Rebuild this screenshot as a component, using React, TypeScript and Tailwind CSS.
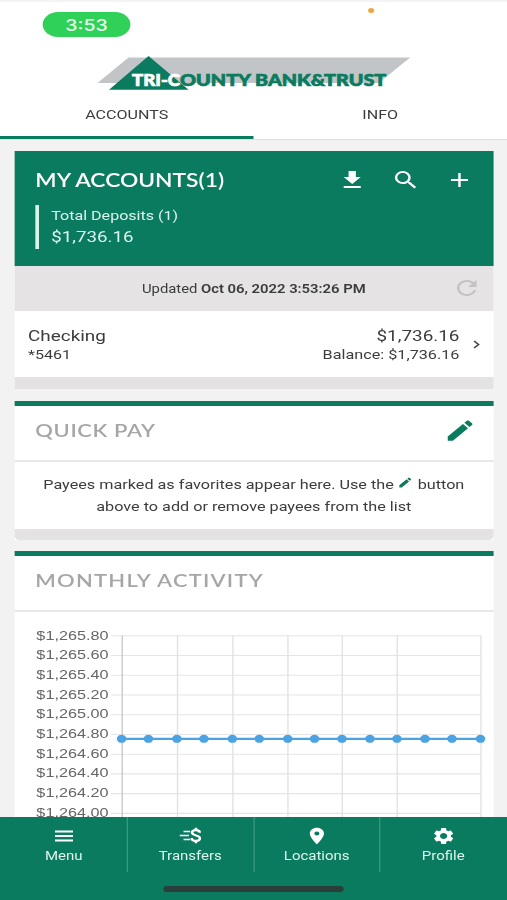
import type { ReactNode } from "react";
import { MdAdd, MdEdit, MdFileDownload, MdRefresh, MdSearch, MdPlace, MdSettings } from "react-icons/md";

const yLabels = [
  "$1,265.80",
  "$1,265.60",
  "$1,265.40",
  "$1,265.20",
  "$1,265.00",
  "$1,264.80",
  "$1,264.60",
  "$1,264.40",
  "$1,264.20",
  "$1,264.00",
];

const gridX = [122.3, 177.6, 233, 288, 342.3, 397.3, 481];
const points = [121.7, 148.5, 177, 204, 232.4, 259.3, 287.8, 314.6, 342, 370, 397, 425, 452, 480.5];

function Logo() {
  return (
    <svg className="block h-[36px] w-[257px]" viewBox="98 55 313 36" preserveAspectRatio="none">
      <polygon points="129,57.5 410.5,57.5 379,83 98,83" fill="#c1c5c8" />
      <polygon points="149,56 189,89.7 109.5,89.7" fill="#0b7b5f" />
      <g fontFamily="Lato, sans-serif" fontWeight="900" fontSize="16.2" strokeWidth="0.7">
        <text x="132.5" y="86" textLength="48" lengthAdjust="spacingAndGlyphs" fill="#fff" stroke="#fff">
          TRI-C
        </text>
        <text x="180.5" y="86" textLength="71" lengthAdjust="spacingAndGlyphs" fill="#0b7b5f" stroke="#0b7b5f">
          OUNTY
        </text>
        <text x="255.5" y="86" textLength="131" lengthAdjust="spacingAndGlyphs" fill="#0b7b5f" stroke="#0b7b5f">
          BANK&amp;TRUST
        </text>
      </g>
    </svg>
  );
}

function MenuIcon() {
  return (
    <svg className="h-3 w-[15px]" viewBox="0 0 15 12" stroke="currentColor" strokeWidth="2">
      <path d="M0 1.4H15M0 6H15M0 10.6H15" />
    </svg>
  );
}

function TransferIcon() {
  return (
    <svg className="h-[19px] w-[18px]" viewBox="0 0 20 20" fill="none" stroke="currentColor" strokeWidth="2.3">
      <path d="M4 5.5H10M0.5 10H9M4 14.5H10" strokeWidth="1.8" />
      <path d="M18.8 7C18.8 5 17.4 4 15.3 4s-3.6 1-3.6 2.8c0 4 7.3 2.2 7.3 6.3 0 1.9-1.6 2.9-3.7 2.9s-3.9-1.1-3.9-3.2M15.3 1.5V4M15.3 16v2.5" />
    </svg>
  );
}

function Section({ title, action, children }: { title: ReactNode; action?: ReactNode; children: ReactNode }) {
  return (
    <section className="mr-[11.5px] ml-3 border-t-[5.5px] border-[#0b7b5f] bg-white">
      <div className="flex h-[56px] items-center justify-between border-b-2 border-[#e8e8e8] pr-[14px] pb-[5px] pl-[17px]">
        <h2 className="font-[Lato,sans-serif] text-[18px] font-semibold text-[#a6a6a6]">{title}</h2>
        {action}
      </div>
      {children}
    </section>
  );
}

function Chart() {
  return (
    <div className="flex h-[206px] overflow-hidden pt-[14px]">
      <div className="w-[77px] shrink-0 text-right font-['Liberation_Sans',sans-serif] text-[13.3px] text-[#666]">
        {yLabels.map((label) => (
          <div key={label} className="h-[19.7px] leading-[19.7px]">
            {label}
          </div>
        ))}
      </div>
      <svg className="-mt-[14px] ml-[2px] h-[206px] w-[313.5px] shrink-0" viewBox="111 612 382 206" preserveAspectRatio="none">
        {yLabels.map((label, i) => (
          <line key={label} x1="111" x2="481" y1={635.8 + i * 19.73} y2={635.8 + i * 19.73} stroke="#e5e5e5" strokeWidth="1.1" />
        ))}
        {gridX.map((x, i) => (
          <line key={x} x1={x} x2={x} y1="635.5" y2="820" stroke={i === 0 ? "#c6c6c6" : "#e0e0e0"} strokeWidth="1.3" />
        ))}
        <line x1="121.7" x2="480.5" y1="738.8" y2="738.8" stroke="#4ba3e3" strokeWidth="2.2" />
        {points.map((x) => (
          <ellipse key={x} cx={x} cy="738.8" rx="4.8" ry="4" fill="#4ba3e3" />
        ))}
      </svg>
    </div>
  );
}

const navItems = [
  { label: "Menu", icon: <MenuIcon /> },
  { label: "Transfers", icon: <TransferIcon /> },
  { label: "Locations", icon: <MdPlace className="size-5" /> },
  { label: "Profile", icon: <MdSettings className="size-5" /> },
];

export default function App() {
  return (
    <div className="h-[900px] w-[507px] overflow-hidden bg-[#f2f2f2]">
      {/* laid out 416 wide, stretched to the full width of the window */}
      <div className="flex h-[900px] w-[416px] origin-top-left scale-x-[1.21875] flex-col font-[Roboto,sans-serif] text-[#3c3c3c]">
        <header className="h-[140px] shrink-0 border-b border-[#dedede] bg-white">
          <div className="flex h-[55px] items-start justify-between border-t-2 border-[#f4f4f4] pr-[109px] pl-[35px]">
            <div className="mt-[10px] flex h-[25px] w-[72px] items-center justify-center rounded-full bg-[#30d158] font-[Inter,sans-serif] text-[16px] font-medium text-[#e6ffee]">
              3:53
            </div>
            <div className="mt-[6px] size-[5px] rounded-full bg-[#eda73f]" />
          </div>
          <div className="pl-[80px]">
            <Logo />
          </div>
          <nav className="flex h-[48px] text-[13.2px]">
            <div className="flex flex-1 items-center justify-center border-b-[3.5px] border-[#0b7b5f] pt-[3px]">ACCOUNTS</div>
            <div className="flex flex-1 items-center justify-center border-b-[3.5px] border-transparent pt-[3px]">INFO</div>
          </nav>
        </header>

        <main className="flex-1 overflow-hidden">
          <section className="mt-[10.5px] mr-[11.5px] ml-3 bg-white">
            <div className="h-[115px] bg-[#0b7b5f] pt-4 pr-[16px] pl-[17px] text-white">
              <div className="flex h-[27px] items-center justify-between">
                <h2 className="font-[Lato,sans-serif] text-[18.7px] font-semibold">MY ACCOUNTS(1)</h2>
                <div className="flex items-center gap-5">
                  <MdFileDownload className="size-6" />
                  <MdSearch className="size-6" />
                  <MdAdd className="size-6" />
                </div>
              </div>
              <div className="mt-[11px] flex h-[44px] flex-col justify-center border-l-[3px] border-[#d8f3ea] pl-[10px] text-[#dcf5ee]">
                <div className="text-[13.2px] leading-[21px]">Total Deposits (1)</div>
                <div className="text-[15.4px] leading-[22px]">$1,736.16</div>
              </div>
            </div>
            <div className="flex h-[45.5px] items-center bg-[#e6e3e5] pr-[10px]">
              <div className="flex-1 pt-px pl-[34px] text-center text-[12.2px] tracking-[-0.02px]">
                Updated <span className="font-semibold">Oct 06, 2022 3:53:26 PM</span>
              </div>
              <MdRefresh className="size-6 text-[#c4c2c3]" />
            </div>
            <div className="flex h-[66px] items-center pr-[10.5px] pl-[11px]">
              <div className="flex-1">
                <div className="text-[15.5px] leading-[20px]">Checking</div>
                <div className="text-[13.2px] leading-[17px]">*5461</div>
              </div>
              <div className="text-right">
                <div className="text-[15.5px] leading-[20px]">$1,736.16</div>
                <div className="text-[13.3px] leading-[17px]">Balance: $1,736.16</div>
              </div>
              <svg className="ml-[11px] h-[9px] w-[6px]" viewBox="0 0 6 9" fill="none" stroke="#444" strokeWidth="1.4">
                <path d="M1 1l3.7 3.5L1 8" />
              </svg>
            </div>
            <div className="h-[11.5px] bg-[#e4e2e3]" />
          </section>

          <div className="h-3" />
          <Section
            title={<span className="tracking-[0.5px]">QUICK PAY</span>}
            action={<MdEdit className="size-[27px] text-[#0b7b5f]" />}
          >
            <div className="h-[67px] pt-3 text-center text-[13.3px] leading-[22px]">
              Payees marked as favorites appear here. Use the <MdEdit className="inline size-[13px] -translate-y-[2px] text-[#0b7b5f]" /> button
              <br />
              above to add or remove payees from the list
            </div>
            <div className="h-[11px] rounded-b-[4px] bg-[#e4e2e3]" />
          </Section>

          <div className="h-[11px] bg-[#f2f2f2]" />
          <Section title={<span className="tracking-[1px]">MONTHLY ACTIVITY</span>}>
            <Chart />
          </Section>
        </main>

        <footer className="h-[83px] shrink-0 bg-[#0b7b5f] text-[#dcf5ee]">
          <div className="flex h-[55px] pl-px">
            {navItems.map((item) => (
              <div key={item.label} className="flex flex-1 flex-col items-center border-r border-[#3d9a80] pt-2 last:border-transparent">
                <div className="flex h-[21px] items-center text-white">{item.icon}</div>
                <div className="text-[12.3px] leading-[20px]">{item.label}</div>
              </div>
            ))}
          </div>
          <div className="mx-auto mt-[14px] h-[5.5px] w-[148px] rounded-full bg-[#2b3f3a]" />
        </footer>
      </div>
    </div>
  );
}
